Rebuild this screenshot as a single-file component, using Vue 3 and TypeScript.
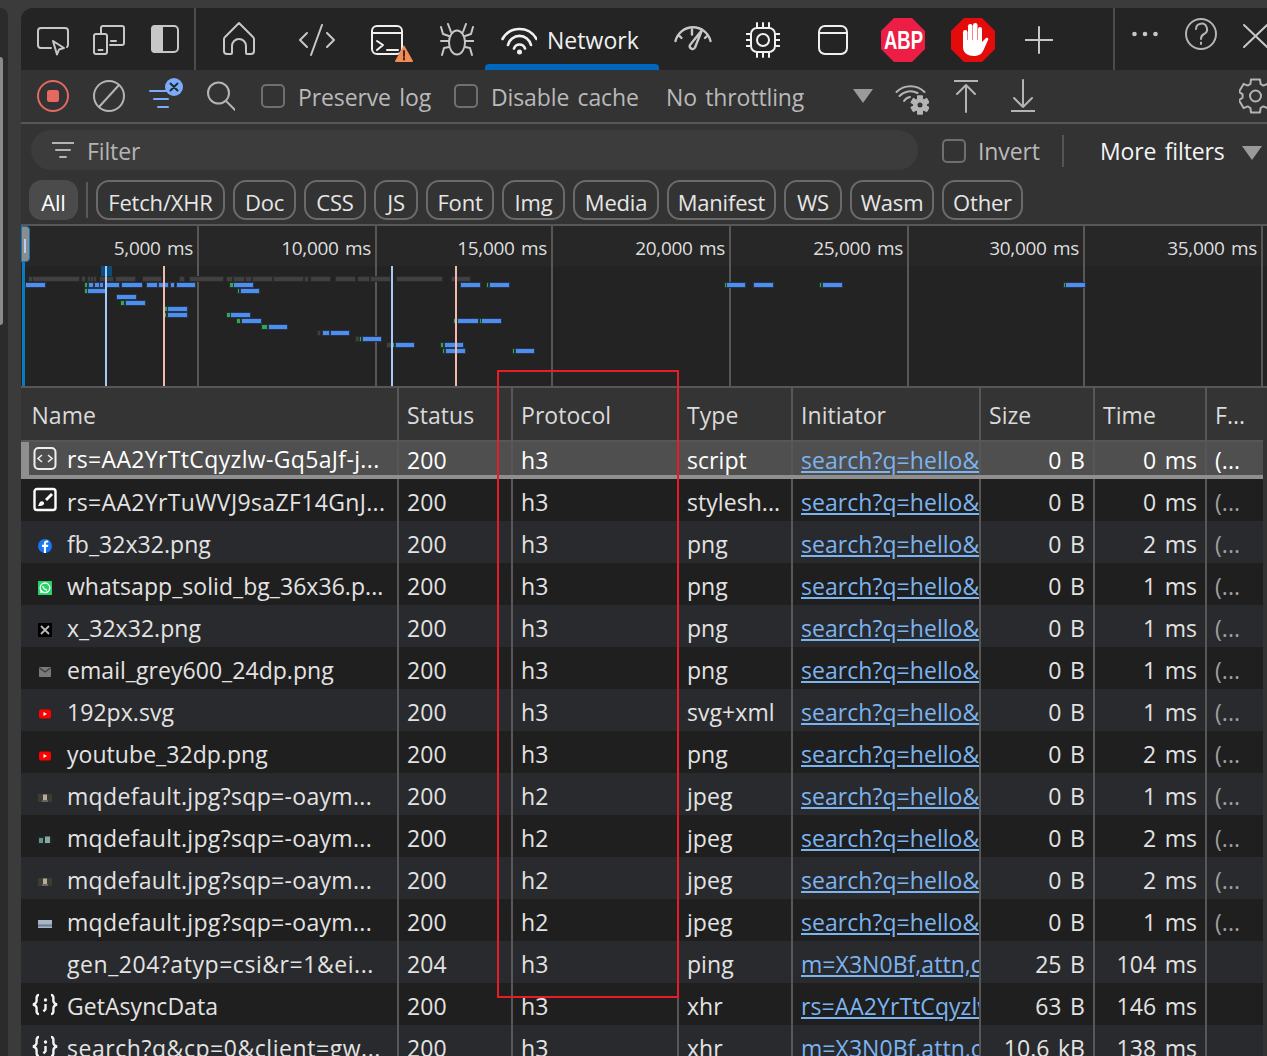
<script setup lang="ts">
type Bar = [number, number, number, string]

const chips = [
  { t: 'Fetch/XHR', w: 129 }, { t: 'Doc', w: 63 }, { t: 'CSS', w: 62 }, { t: 'JS', w: 44 },
  { t: 'Font', w: 68 }, { t: 'Img', w: 63 }, { t: 'Media', w: 86 }, { t: 'Manifest', w: 109 },
  { t: 'WS', w: 58 }, { t: 'Wasm', w: 84 }, { t: 'Other', w: 81 },
]
const ticks = ['5,000 ms', '10,000 ms', '15,000 ms', '20,000 ms', '25,000 ms', '30,000 ms', '35,000 ms']
const tickWidths = [176, 178, 176, 178, 178, 176, 178]

// Six-lobed cog outline, top lobe pointing up.
function cog(cx: number, cy: number, outer: number, inner: number): string {
  const pts: string[] = []
  for (let i = 0; i < 6; i++) {
    const a = (-90 + i * 60) * Math.PI / 180
    const step = 0.27
    const valley = 0.52
    const at = (r: number, t: number) => `${(cx + r * Math.cos(t)).toFixed(1)} ${(cy + r * Math.sin(t)).toFixed(1)}`
    pts.push(at(inner, a - valley + 0.12), at(outer, a - step), at(outer, a + step), at(inner, a + valley - 0.12))
  }
  return 'M' + pts.join('L') + 'Z'
}
const bigCog = cog(1255.5, 96, 17, 13)
const smallCog = cog(920, 105, 9.5, 6.5)

// Per-name tracking: the long truncated names run wider in the reference.
function tracking(name: string): string {
  if (name.startsWith('rs=')) return '0.35px'
  if (name.startsWith('mq')) return '0.33px'
  if (name.startsWith('gen') || name.startsWith('search')) return '0.55px'
  return '0.05px'
}

const sx = (v: number) => v / 2.613
const greySegs = [[75,83],[85,207],[213,222],[230,234],[238,242],[246,250],[262,295],[303,352],[373,420],[470,482],[497,583],[593,606],[612,637],[643,655],[662,710],[716,792],[798,806],[813,862],[878,928],[935,964],[970,1018],[1037,1155],[1180,1228]]
const bars: Bar[] = [
  ...greySegs.map(([a, b]) => [sx(a), sx(b), 279, 'g'] as Bar),
  [26,45,285,'b'],[85,87,285,'t'],[89,93,285,'b'],[95,99,285,'b'],[100,103,285,'b'],[105,119,285,'b'],[122,142,285,'b'],[147,157,285,'b'],[159,168,285,'b'],[171,174,285,'b'],[177,195,285,'b'],
  [230,233,285,'t'],[234,253,285,'b'],[461,480,285,'b'],[487,488,285,'t'],[490,509,285,'b'],[725,726,285,'t'],[727,745,285,'b'],[754,773,285,'b'],[820,821,285,'t'],[823,842,285,'b'],[1064,1065,285,'t'],[1066,1085,285,'b'],
  [85,87,291,'t'],[88,105,291,'b'],[238,239,291,'t'],[241,259,291,'b'],
  [117,136,297,'b'],
  [121,124,303,'t'],[126,145,303,'b'],
  [165,167,309,'t'],[168,187,309,'b'],
  [165,166,315,'t'],[168,187,315,'b'],[227,230,315,'t'],[231,250,315,'b'],
  [237,240,321,'t'],[242,261,321,'b'],[454,457,321,'t'],[458,478,321,'b'],[480,481,321,'t'],[482,501,321,'b'],
  [262,267,327,'t'],[269,287,327,'b'],
  [318,320,333,'g'],[323,329,333,'b'],[331,349,333,'b'],
  [356,359,339,'g'],[360,361,339,'t'],[363,381,339,'b'],
  [387,392,345,'g'],[393,394,345,'t'],[396,414,345,'b'],[441,443,345,'t'],[445,463,345,'b'],
  [443,444,351,'t'],[446,465,351,'b'],[513,514,351,'t'],[516,534,351,'b'],
]
const markers: [number, string][] = [[105, 'mb'], [163, 'mr'], [391, 'mb'], [455, 'mr']]

const s = 'search?q=hello&sca_esv=abc'
const m = 'm=X3N0Bf,attn,cdos,hsm'
const rows = [
  { n: 'rs=AA2YrTtCqyzlw-Gq5aJf-j...', st: '200', p: 'h3', ty: 'script', i: s, sz: '0 B', tm: '0 ms', f: '(...', ic: 'js' },
  { n: 'rs=AA2YrTuWVJ9saZF14GnJ...', st: '200', p: 'h3', ty: 'stylesh...', i: s, sz: '0 B', tm: '0 ms', f: '(...', ic: 'css' },
  { n: 'fb_32x32.png', st: '200', p: 'h3', ty: 'png', i: s, sz: '0 B', tm: '2 ms', f: '(...', ic: 'fb' },
  { n: 'whatsapp_solid_bg_36x36.p...', st: '200', p: 'h3', ty: 'png', i: s, sz: '0 B', tm: '1 ms', f: '(...', ic: 'wa' },
  { n: 'x_32x32.png', st: '200', p: 'h3', ty: 'png', i: s, sz: '0 B', tm: '1 ms', f: '(...', ic: 'x' },
  { n: 'email_grey600_24dp.png', st: '200', p: 'h3', ty: 'png', i: s, sz: '0 B', tm: '1 ms', f: '(...', ic: 'mail' },
  { n: '192px.svg', st: '200', p: 'h3', ty: 'svg+xml', i: s, sz: '0 B', tm: '1 ms', f: '(...', ic: 'yt' },
  { n: 'youtube_32dp.png', st: '200', p: 'h3', ty: 'png', i: s, sz: '0 B', tm: '2 ms', f: '(...', ic: 'yt' },
  { n: 'mqdefault.jpg?sqp=-oaym...', st: '200', p: 'h2', ty: 'jpeg', i: s, sz: '0 B', tm: '1 ms', f: '(...', ic: 't1' },
  { n: 'mqdefault.jpg?sqp=-oaym...', st: '200', p: 'h2', ty: 'jpeg', i: s, sz: '0 B', tm: '2 ms', f: '(...', ic: 't2' },
  { n: 'mqdefault.jpg?sqp=-oaym...', st: '200', p: 'h2', ty: 'jpeg', i: s, sz: '0 B', tm: '2 ms', f: '(...', ic: 't1' },
  { n: 'mqdefault.jpg?sqp=-oaym...', st: '200', p: 'h2', ty: 'jpeg', i: s, sz: '0 B', tm: '1 ms', f: '(...', ic: 't3' },
  { n: 'gen_204?atyp=csi&r=1&ei...', st: '204', p: 'h3', ty: 'ping', i: m, sz: '25 B', tm: '104 ms', f: '', ic: '' },
  { n: 'GetAsyncData', st: '200', p: 'h3', ty: 'xhr', i: 'rs=AA2YrTtCqyzlw-Gq5', sz: '63 B', tm: '146 ms', f: '', ic: 'xhr' },
  { n: 'search?q&cp=0&client=gw...', st: '200', p: 'h3', ty: 'xhr', i: m, sz: '10.6 kB', tm: '138 ms', f: '', ic: 'xhr' },
]
</script>

<template>
  <div class="page">
    <div class="edge"></div>
    <main class="panel">
      <!-- tab bar -->
      <div class="tabbar">
        <svg class="ic w32" viewBox="37 8 32 62" width="32" height="62"><path d="M51 48H41a3 3 0 0 1-3-3V31a3 3 0 0 1 3-3h24a3 3 0 0 1 3 3v14a3 3 0 0 1-1 2" /><path d="M53 41l11 7-5 1.5-2 5z" /></svg>
        <svg class="ic w32 m24" viewBox="93 8 32 62" width="32" height="62"><path d="M101 33v-5a2 2 0 0 1 2-2h19a2 2 0 0 1 2 2v15a2 2 0 0 1-2 2h-12" /><rect x="94" y="34" width="13" height="20" rx="2" /><path d="M98.5 50h4M111 41h5" /></svg>
        <svg class="ic w28 m26" viewBox="151 8 28 62" width="28" height="62"><rect x="152" y="26" width="26" height="26" rx="4" /><path class="fill" d="M155 25h8v28h-8a4 4 0 0 1-4-4V29a4 4 0 0 1 4-4z" /></svg>
        <div class="vr m15"></div>
        <svg class="ic w32 m27" viewBox="223 8 32 62" width="32" height="62"><path d="M239 23L225 37a3 3 0 0 0-1 2v12a3 3 0 0 0 3 3h4a1 1 0 0 0 1-1v-7a7 7 0 0 1 14 0v7a1 1 0 0 0 1 1h4a3 3 0 0 0 3-3V39a3 3 0 0 0-1-2z" /></svg>
        <svg class="ic w36 m44" viewBox="299 8 36 62" width="36" height="62"><path d="M307 33l-7 7 7 7M322 25l-11 30M327 33l7 7-7 7" /></svg>
        <svg class="ic white w42 m36" viewBox="371 8 42 62" width="42" height="62"><rect x="372" y="26" width="30" height="28" rx="5" /><path d="M372 33h30M377 41l6 4-6 5M387 50h11" /><path class="warn" d="M404 45l9 16a1 1 0 0 1-1 1h-16a1 1 0 0 1-1-1z" /><path class="warnmark" d="M404 51v5M404 58v1.5" /></svg>
        <svg class="ic w34 m27" viewBox="440 8 34 62" width="34" height="62"><ellipse cx="457" cy="42.5" rx="8" ry="12" /><path d="M451 32l-3-8M463 32l3-8M449 36l-6-2-2-7M465 36l6-2 2-7M441 41h8M465 41h9M449 47l-5 1-2 7M465 47l5 1 2 7" /></svg>
        <div class="tab m11">
          <svg class="ic white w36 wifi" viewBox="501 8 36 56" width="36" height="56"><path d="M502.5 39a19.4 19.4 0 0 1 34 0M508 45a11.8 11.8 0 0 1 23 0M514 48.5a5.8 5.8 0 0 1 11 0" /><circle class="fillw" cx="519.5" cy="52" r="2.5" /></svg>
          <span class="tabtext">Network</span>
        </div>
        <svg class="ic gauge w38 m15" viewBox="674 8 38 62" width="38" height="62"><path d="M675.5 41a18 18 0 0 1 35 0M692 29.5v5M678.5 35l3 3M708 35l-3 3" /><path d="M702 30l-7 17.5a2.8 2.8 0 0 1-5-2.5z" /></svg>
        <svg class="ic white w34 m34" viewBox="746 8 34 62" width="34" height="62"><rect x="751" y="28" width="24" height="24" rx="6" /><circle cx="763" cy="40" r="6" /><path d="M757 23v5M763 23v5M769 23v5M757 52v5M763 52v5M769 52v5M746 34h5M746 40h5M746 46h5M775 34h5M775 40h5M775 46h5" /></svg>
        <svg class="ic white w30 m38" viewBox="818 8 30 62" width="30" height="62"><rect x="819" y="26" width="28" height="28" rx="6" /><path d="M819 33h28" /></svg>
        <svg class="logo w44 m33" viewBox="881 8 44 62" width="44" height="62"><polygon fill="#ed1e45" points="894,18 912,18 925,31 925,49 912,62 894,62 881,49 881,31" /><text class="abp" x="884" y="49" textLength="39" lengthAdjust="spacingAndGlyphs">ABP</text></svg>
        <svg class="logo w44 m26" viewBox="951 8 44 62" width="44" height="62"><polygon fill="#e40b0b" points="964,18 982,18 995,31 995,49 982,62 964,62 951,49 951,31" /><g fill="#fff"><rect x="963" y="30" width="4.5" height="18" rx="2.2" /><rect x="968" y="24" width="4.5" height="22" rx="2.2" /><rect x="973" y="23" width="4.5" height="22" rx="2.2" /><rect x="978" y="27" width="4" height="20" rx="2" /><path d="M963 40h19v2l4-4c2-1 3 1 2 2l-4 9c-2 5-5 7-10 7-6 0-11-3-11-9z" /></g></svg>
        <svg class="ic w28 m30" viewBox="1025 8 28 62" width="28" height="62"><path d="M1025 40h28M1039 27v26" /></svg>
        <div class="vr m60"></div>
        <svg class="logo w26 m17" viewBox="1132 8 26 62" width="26" height="62"><g fill="#c7c7c7"><circle cx="1134.5" cy="34" r="2.3" /><circle cx="1145" cy="34" r="2.3" /><circle cx="1155.5" cy="34" r="2.3" /></g></svg>
        <svg class="ic dim w32 m27" viewBox="1185 8 32 62" width="32" height="62"><circle cx="1201" cy="34" r="15" /><path d="M1196 29a5.5 5.5 0 1 1 8 5c-2 1-3 2-3 5M1201 42.5v1.5" /></svg>
        <svg class="ic w24 m26" viewBox="1243 8 24 62" width="24" height="62"><path d="M1244 25l23 22M1267 25l-23 22" /></svg>
      </div>

      <!-- controls -->
      <div class="toolbar">
        <svg class="ic w32" viewBox="37 70 32 52" width="32" height="52"><circle class="rec" cx="53" cy="96" r="15" /><rect class="recf" x="47" y="90" width="12" height="12" rx="2.5" /></svg>
        <svg class="ic dim w32 m24" viewBox="93 70 32 52" width="32" height="52"><circle cx="109" cy="96" r="15" /><path d="M99 107l20-22" /></svg>
        <svg class="ic w34 m24" viewBox="149 70 34 52" width="34" height="52"><path class="blue" d="M150 91h21M154 99h14M158 107h10" /><circle class="bluef" cx="174" cy="87" r="9" /><path class="xm" d="M170.5 83.5l7 7M177.5 83.5l-7 7" /></svg>
        <svg class="ic dim w28 m24" viewBox="207 70 28 52" width="28" height="52"><circle cx="218.5" cy="93" r="10.5" /><path d="M226 101l9 9" /></svg>
        <span class="box m26"></span><span class="label l-preserve">Preserve log</span>
        <span class="box"></span><span class="label l-cache">Disable cache</span>
        <span class="label l-throttle">No throttling</span>
        <span class="tri"></span>
        <svg class="ic dim w34 m22" viewBox="895 70 34 52" width="34" height="52"><path d="M896.5 92a20 20 0 0 1 28 0M899.5 96a15 15 0 0 1 18-3M904 101a9 9 0 0 1 6-4" /><path class="gearf" :d="smallCog" /><circle class="hole" cx="920" cy="105" r="2.5" /></svg>
        <svg class="ic dim w24 m25" viewBox="954 70 24 52" width="24" height="52"><path d="M954 81h24M966 112V85M957 94l9-9 9 9" /></svg>
        <svg class="ic dim w24 m33" viewBox="1011 70 24 52" width="24" height="52"><path d="M1011 111h24M1023 80v27M1014 98l9 9 9-9" /></svg>
        <svg class="ic dim w28 m204" viewBox="1239 70 28 52" width="28" height="52"><circle cx="1255.5" cy="96" r="5.5" /><path :d="bigCog" /></svg>
      </div>

      <!-- filter -->
      <div class="filterbar">
        <div class="pill">
          <svg class="ic dim fi" viewBox="0 0 22 16" width="22" height="16"><path d="M0 1h22M4 8h14M8 15h6" /></svg>
          <span class="ph">Filter</span>
        </div>
        <span class="box invbox"></span><span class="label l-invert">Invert</span>
        <div class="vr2"></div>
        <span class="more">More filters</span>
        <span class="tri tri2"></span>
      </div>

      <!-- chips -->
      <div class="chips">
        <span class="all">All</span>
        <span class="chipdiv"></span>
        <span v-for="c in chips" :key="c.t" class="chip" :style="{ width: c.w + 'px' }">{{ c.t }}</span>
      </div>

      <!-- timeline -->
      <section class="timeline">
        <div class="ticks">
          <div v-for="(t, i) in ticks" :key="t" class="tick" :style="{ width: tickWidths[i] + 'px' }"><span>{{ t }}</span></div>
        </div>
        <div class="selbar"></div>
        <div class="handle"><i></i></div>
        <div class="shade"></div>
        <span v-for="(b, i) in bars" :key="i" class="bar" :class="'k' + b[3]" :style="{ left: (b[0] - 21) + 'px', width: (b[1] - b[0]) + 'px', top: (b[2] - 226 - 2) + 'px' }"></span>
        <span v-for="mk in markers" :key="mk[0]" class="marker" :class="mk[1]" :style="{ left: (mk[0] - 21) + 'px' }"></span>
      </section>

      <!-- table -->
      <section class="table">
        <div class="grid head">
          <div class="c">Name</div><div class="c b">Status</div><div class="c b">Protocol</div><div class="c b">Type</div><div class="c b">Initiator</div><div class="c b">Size</div><div class="c b">Time</div><div class="c b">F...</div>
        </div>
        <div v-for="(r, i) in rows" :key="i" class="grid row" :class="{ sel: i === 0, odd: i > 0 && i % 2 === 0 }">
          <div class="c name">
            <svg class="rowic" viewBox="0 0 26 26" width="26" height="26">
              <template v-if="r.ic === 'js'"><rect x="2.5" y="2" width="21" height="21" rx="4" fill="none" stroke="#eee" stroke-width="2" /><path d="M10 9l-4 3.5 4 3.5M16 9l4 3.5-4 3.5" fill="none" stroke="#eee" stroke-width="1.6" /></template>
              <template v-else-if="r.ic === 'css'"><rect x="2.5" y="2" width="21" height="21" rx="2.5" fill="none" stroke="#fff" stroke-width="2.4" /><path d="M19 6l-6 6 2 2 6-6z" fill="#fff" /><path d="M8 15c2-2 5 0 4 2-1 2-4 2-6 2 1-1 1-3 2-4z" fill="#fff" /></template>
              <template v-else-if="r.ic === 'fb'"><g transform="translate(0 4)"><circle cx="13" cy="13" r="7" fill="#1877f2" /><path d="M14 20v-6h2l.4-2.2H14v-1.2c0-.7.4-1.1 1.2-1.1h1.1V7.6c-2.5-.5-4.4.3-4.4 2.8v1.4h-1.9V14h1.9v6z" fill="#fff" /></g></template>
              <template v-else-if="r.ic === 'wa'"><g transform="translate(0 4)"><rect x="6" y="6" width="14" height="14" fill="#25d366" /><circle cx="13" cy="12.8" r="4.8" fill="none" stroke="#fff" stroke-width="1.4" /><path d="M8 18l1-3.5 2.5 2.5z" fill="#fff" /><path d="M11 11c0 2 2 4 4 4" fill="none" stroke="#fff" stroke-width="1.3" /></g></template>
              <template v-else-if="r.ic === 'x'"><g transform="translate(0 4)"><rect x="6" y="6" width="14" height="14" fill="#000" /><path d="M9 9l8 8M17 9l-8 8" stroke="#bbb" stroke-width="1.8" /></g></template>
              <template v-else-if="r.ic === 'mail'"><g transform="translate(0 4)"><rect x="7" y="8" width="12" height="10" rx="1" fill="#7a7a7a" /><path d="M7.5 9l5.5 4 5.5-4" fill="none" stroke="#3a3a3a" stroke-width="1.2" /></g></template>
              <template v-else-if="r.ic === 'yt'"><g transform="translate(0 4)"><rect x="7" y="8.5" width="12" height="9" rx="2" fill="#f00" /><path d="M11.5 11l3.5 2-3.5 2z" fill="#fff" /></g></template>
              <template v-else-if="r.ic === 't1'"><g transform="translate(0 4)"><rect x="6" y="9" width="14" height="8" fill="#3f3a34" /><rect x="11" y="9.5" width="4" height="6" fill="#b3ac98" /><rect x="10" y="15" width="6" height="2" fill="#6a655c" /></g></template>
              <template v-else-if="r.ic === 't2'"><g transform="translate(0 4)"><rect x="6" y="9" width="14" height="8" fill="#1d2a2a" /><rect x="7" y="11" width="4" height="5" fill="#6c8f8a" /><rect x="13" y="9.5" width="5" height="6.5" fill="#8aa8a0" /></g></template>
              <template v-else-if="r.ic === 't3'"><g transform="translate(0 4)"><rect x="6" y="9" width="14" height="8" fill="#a6b6c6" /><rect x="6" y="13.5" width="14" height="2" fill="#6f7b88" /></g></template>
              <template v-else-if="r.ic === 'xhr'"><g transform="translate(0 2)" fill="none" stroke="#f4f4f4" stroke-width="2.4"><path d="M7 2C3.5 2 5 6.5 4.5 8.5S3 11 1 11.5c2 .5 3 1 3.5 3S3.5 21 7 21M19 2c3.5 0 2 4.5 2.5 6.5s1.5 2.5 3.5 3c-2 .5-3 1-3.5 3s1 6.5-2.5 6.5" /><path d="M13.5 11v5l-2 2.5" /></g><circle cx="13.5" cy="9" r="1.7" fill="#f4f4f4" /></template>
            </svg>
            <span class="txt" :style="{ letterSpacing: tracking(r.n) }">{{ r.n }}</span>
          </div>
          <div class="c b">{{ r.st }}</div>
          <div class="c b">{{ r.p }}</div>
          <div class="c b">{{ r.ty }}</div>
          <div class="c b clip"><a class="link">{{ r.i }}</a></div>
          <div class="c b right">{{ r.sz }}</div>
          <div class="c b right">{{ r.tm }}</div>
          <div class="c b fc">{{ r.f }}</div>
        </div>
      </section>
    </main>
    <div class="redbox"></div>
  </div>
</template>

<style>
html, body { margin: 0; background: #3b3b3b; overflow: hidden; }
</style>

<style scoped>
.page {
  position: relative;
  width: 1267px;
  height: 1056px;
  overflow: hidden;
  background: #3b3b3b;
  font-family: "Open Sans", "Noto Sans", sans-serif;
  font-size: 23px;
  letter-spacing: 0.05px;
  word-spacing: 2.5px;
  color: #e3e3e3;
  padding: 8px 0 0 21px;
  box-sizing: border-box;
}
.edge {
  position: absolute;
  left: 0;
  top: 8px;
  width: 8px;
  height: 1048px;
  background: #2b2b2b;
  border-top-right-radius: 8px;
}
.edge::after {
  content: "";
  position: absolute;
  left: 0;
  top: 49px;
  width: 3px;
  height: 268px;
  border-radius: 0 3px 3px 0;
  background: #8a8a8a;
}
.panel {
  width: 1246px;
  height: 1048px;
  background: #333;
  border-top-left-radius: 12px;
  overflow: hidden;
}
.tabbar {
  height: 62px;
  background: #242424;
  display: flex;
  align-items: flex-start;
  padding-left: 16px;
}
.toolbar {
  height: 52px;
  display: flex;
  align-items: center;
  padding-left: 16px;
  border-bottom: 2px solid #575757;
  color: #bdbdbd;
}
svg { display: block; flex: none; }
.ic { fill: none; stroke: #c7c7c7; stroke-width: 2; stroke-linecap: round; stroke-linejoin: round; }
.ic.white { stroke: #f0f0f0; }
.ic.dim { stroke: #b4b4b4; }
.wifi { stroke-width: 2.6; }
.gauge { stroke-width: 2.4; }
.fill { fill: #c7c7c7; stroke: none; }
.fillw { fill: #f0f0f0; stroke: none; }
.warn { fill: #f28b54; stroke: none; }
.warnmark { stroke: #3a2a20; stroke-width: 2; }
.abp { font-family: "Liberation Sans", sans-serif; font-weight: 700; font-size: 26px; fill: #fff; letter-spacing: 0; word-spacing: 0; }
.rec { stroke: #e46962; }
.recf { fill: #e46962; stroke: none; }
.blue { stroke: #7cacf8; }
.bluef { fill: #7cacf8; stroke: none; }
.xm { stroke: #1f2a3a; stroke-width: 2; }
.gearf { fill: #b4b4b4; stroke: #b4b4b4; stroke-width: 1; }
.hole { fill: #333; stroke: none; }
.w24 { width: 24px; } .w26 { width: 26px; } .w28 { width: 28px; } .w30 { width: 30px; } .w32 { width: 32px; }
.w34 { width: 34px; } .w36 { width: 36px; } .w38 { width: 38px; } .w42 { width: 42px; } .w44 { width: 44px; }
.m11 { margin-left: 11px; } .m15 { margin-left: 15px; } .m17 { margin-left: 17px; } .m22 { margin-left: 22px; }
.m24 { margin-left: 24px; } .m25 { margin-left: 25px; } .m26 { margin-left: 26px; } .m27 { margin-left: 27px; }
.m30 { margin-left: 30px; } .m33 { margin-left: 33px; } .m34 { margin-left: 34px; } .m36 { margin-left: 36px; }
.m38 { margin-left: 38px; } .m44 { margin-left: 44px; } .m60 { margin-left: 60px; } .m204 { margin-left: 204px; }
.vr { width: 2px; height: 62px; background: #4c4c4c; flex: none; }
.tab {
  width: 174px;
  height: 62px;
  flex: none;
  box-sizing: border-box;
  padding-left: 16px;
  display: flex;
  align-items: flex-start;
  position: relative;
  color: #f0f0f0;
}
.tab::after {
  content: "";
  position: absolute;
  left: 0;
  right: 0;
  bottom: 0;
  height: 6px;
  border-radius: 4px 4px 0 0;
  background: #0067c0;
}
.tabtext { margin-left: 10px; line-height: 64px; }
.box {
  width: 24px;
  height: 24px;
  flex: none;
  box-sizing: border-box;
  border: 2px solid #6f6f6f;
  border-radius: 5px;
}
.label { flex: none; box-sizing: border-box; color: #b9b9b9; letter-spacing: -0.12px; }
.toolbar .label { padding-top: 2px; }
.l-preserve { width: 169px; padding-left: 13px; }
.l-cache { width: 188px; padding-left: 13px; }
.l-throttle { width: 187px; }
.tri {
  width: 0;
  height: 0;
  flex: none;
  border-left: 10px solid transparent;
  border-right: 10px solid transparent;
  border-top: 14px solid #9a9a9a;
}
.filterbar {
  height: 53px;
  display: flex;
  align-items: center;
  padding-left: 10px;
}
.pill {
  width: 887px;
  height: 40px;
  flex: none;
  margin-top: -1px;
  border-radius: 20px;
  background: #3c3c3c;
  display: flex;
  align-items: center;
  padding-left: 21px;
  box-sizing: border-box;
}
.fi { width: 22px; height: 16px; }
.ph { margin-left: 13px; padding-top: 1px; color: #b4b4b4; letter-spacing: -0.12px; }
.invbox { margin-left: 24px; }
.l-invert { width: 96px; padding-left: 12px; }
.vr2 { width: 2px; height: 32px; background: #555; flex: none; }
.more { margin-left: 36px; width: 142px; flex: none; color: #f4f4f4; letter-spacing: -0.12px; }
.tri2 { margin-top: 4px; }
.chips {
  height: 47px;
  display: flex;
  align-items: flex-start;
  padding: 3px 0 0 8px;
  box-sizing: border-box;
  gap: 8px;
  font-size: 22px;
  letter-spacing: -0.2px;
}
.chip, .all {
  height: 40px;
  box-sizing: border-box;
  display: flex;
  align-items: center;
  justify-content: center;
  flex: none;
  padding-top: 3px;
  border-radius: 13px;
  color: #e6e6e6;
  white-space: nowrap;
}
.chip { border: 2px solid #6a6a6a; }
.all { width: 49px; background: #4b4b4b; color: #fff; border: none; }
.chipdiv { width: 2px; height: 36px; margin: 2px 0 0 0; background: #5a5a5a; flex: none; }
.timeline {
  position: relative;
  height: 160px;
  border-top: 2px solid #575757;
  border-bottom: 2px solid #575757;
  background: #232323;
  overflow: hidden;
}
.ticks {
  display: flex;
  height: 160px;
  padding-left: 2px;
  background: linear-gradient(#272727 40px, transparent 40px);
}
.tick {
  box-sizing: border-box;
  border-right: 2px solid #575757;
  text-align: right;
  padding-right: 4px;
  line-height: 44px;
  font-size: 19px;
  letter-spacing: -0.35px;
  word-spacing: 2px;
  flex: none;
  color: #dedede;
}
.selbar { position: absolute; left: 1px; top: 0; width: 3px; height: 160px; background: #0b7bbf; }
.handle {
  position: absolute;
  left: 0;
  top: 0;
  width: 9px;
  height: 36px;
  box-sizing: border-box;
  background: #8c8c8c;
  border: 1px solid #0b7bbf;
  border-radius: 0 4px 4px 0;
}
.handle i { position: absolute; left: 2px; top: 12px; width: 2px; height: 14px; background: #b8cdf0; }
.shade { position: absolute; left: 80px; top: 40px; width: 11px; height: 21px; background: #0a4d7a; }
.bar { position: absolute; height: 4px; }
.kb { background: #4d8fef; box-shadow: 0 0 0 1px #27344a; }
.kt { background: #2ea95a; box-shadow: 0 0 0 1px #233229; }
.kg { background: #404040; box-shadow: 0 0 0 1px #2a2a2a; }
.marker { position: absolute; top: 40px; width: 2px; height: 120px; }
.mb { background: #a8c7fa; }
.mr { background: #f4b8b0; }
.table { background: #333; }
.grid {
  display: grid;
  grid-template-columns: 376px 114px 166px 114px 188px 114px 112px 58px;
  width: 1242px;
}
.head { height: 52px; background: #343434; border-bottom: 2px solid #575757; box-sizing: content-box; align-items: stretch; }
.head .c { color: #dadada; padding-top: 2px; display: flex; align-items: center; }
.head .c:first-child { padding-left: 10.5px; border-left: 0; }
.row { height: 42px; background: #1f1f1f; line-height: 46px; }
.row.odd { background: #292a2d; }
.row.sel { height: 33px; background: #4f4f4f; border-bottom: 4px solid #8f8f8f; box-sizing: content-box; line-height: 36px; color: #fff; }
.c { box-sizing: border-box; padding-left: 8px; white-space: nowrap; overflow: hidden; min-width: 0; }
.b { border-left: 2px solid #575757; }
.name { display: flex; align-items: center; }
.row .name { padding-left: 11px; }
.sel .name { box-shadow: inset 8px 0 #8f8f8f; }
.txt { margin-left: 9px; padding-top: 3px; line-height: 42px; }
.sel .txt { padding-top: 2px; line-height: 33px; }
.right { text-align: right; padding-left: 0; padding-right: 8px; }
.clip { padding-right: 0; }
.link { color: #7cb4f0; text-decoration: underline; text-underline-offset: 2px; word-spacing: 0; }
.fc { color: #9f9f9f; }
.sel .fc { color: #fff; }
.redbox {
  position: absolute;
  left: 497px;
  top: 370px;
  width: 182px;
  height: 628px;
  box-sizing: border-box;
  border: 2px solid #e81c24;
  pointer-events: none;
}
</style>
